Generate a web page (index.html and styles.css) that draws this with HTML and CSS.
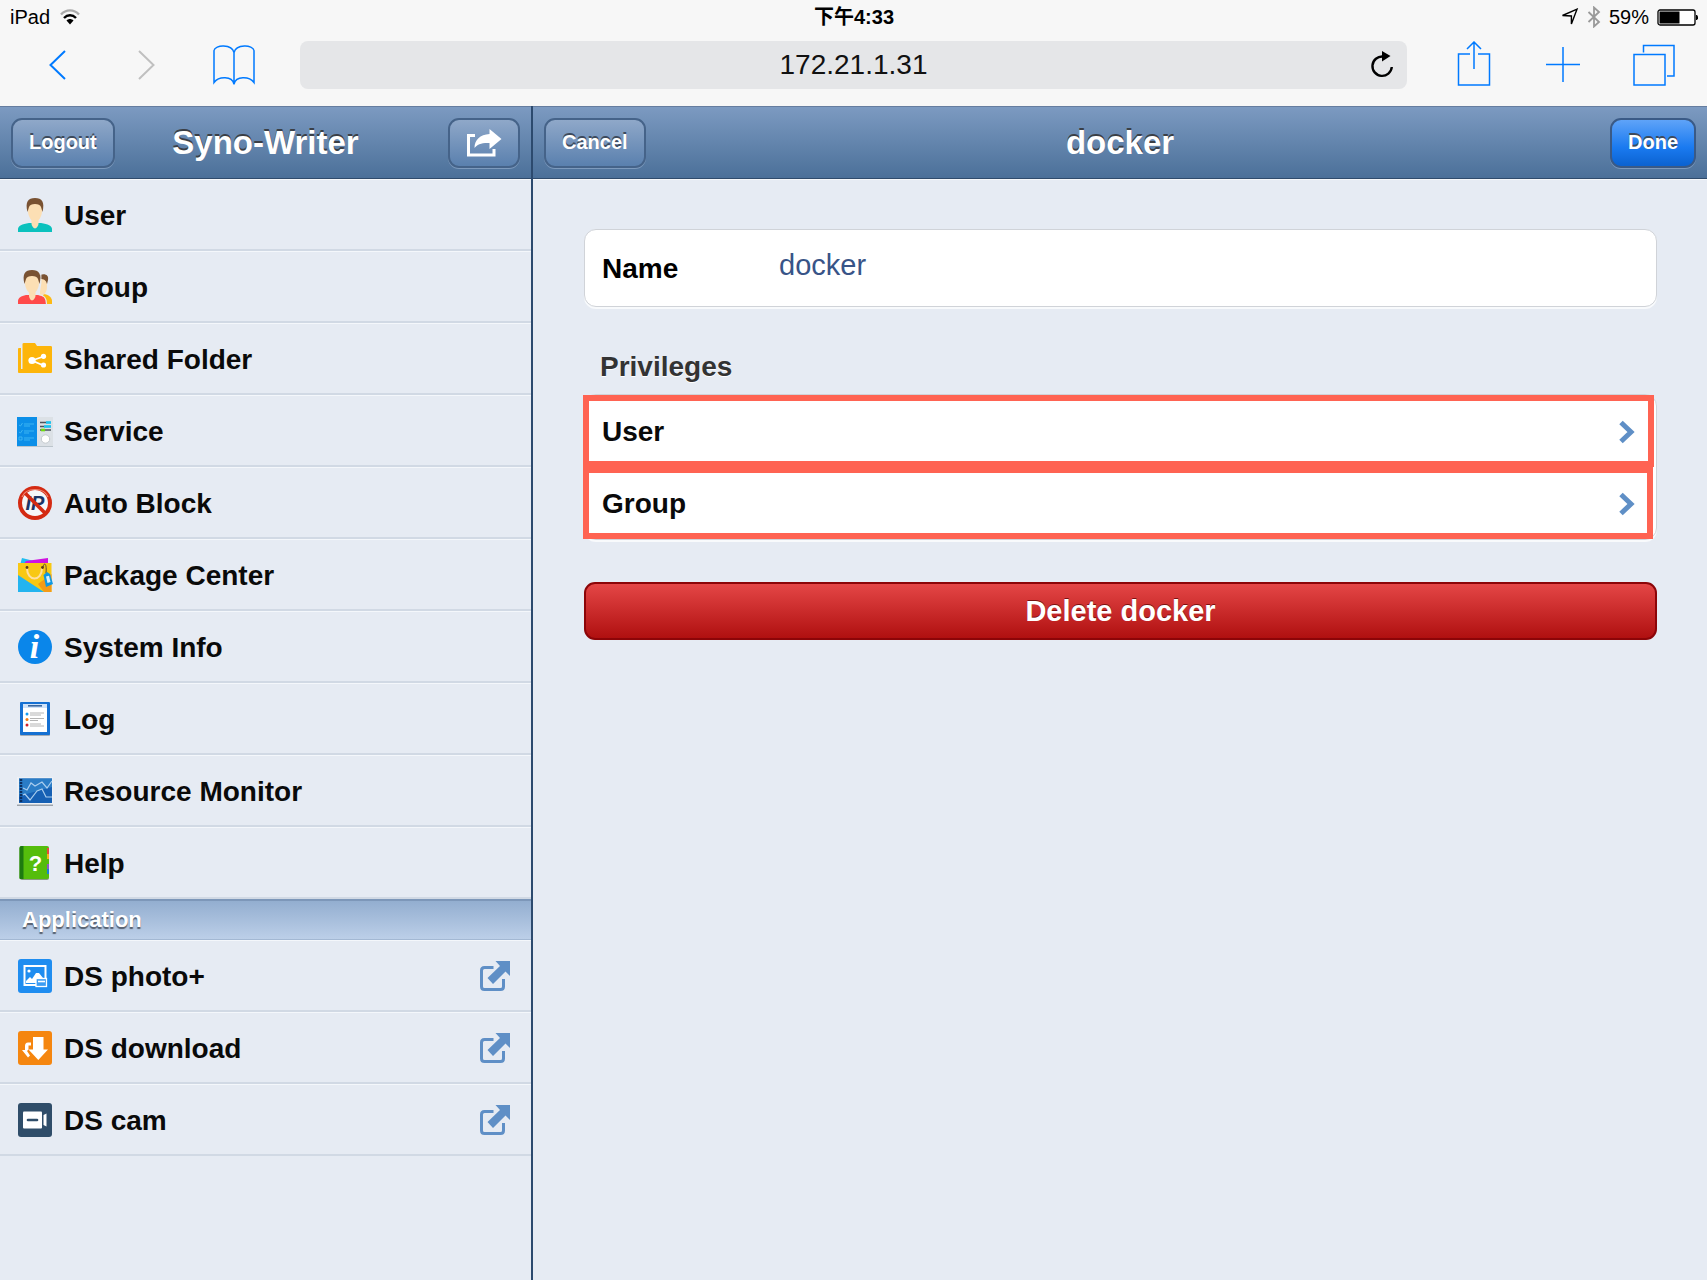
FILE: index.html
```html
<!DOCTYPE html>
<html lang="en">

<head>
    <meta charset="UTF-8">
    <meta name="viewport" content="width=device-width, initial-scale=1.0">
    <title>docker - Syno-Writer</title>
    <link rel="stylesheet" href="styles.css">
</head>

<body>
    <!-- browser bar -->
    <div class="browser">
        <div class="status">
            <div class="status-left">
                <span>iPad</span>
                <svg width="20" height="16" viewBox="0 0 20 16">
                    <path d="M1 5.500C6 0 14 0 19 5.500" fill="none" stroke="#aaa" stroke-width="2.400"/>
                    <path d="M4 9C7.500 5.300 12.500 5.300 16 9" fill="none" stroke="#000" stroke-width="2.400"/>
                    <path d="M6.500 11.500C8.500 9.500 11.500 9.500 13.500 11.500L10 15.500z" fill="#000"/>
                </svg>
            </div>
            <div class="status-time">下午4:33</div>
            <div class="status-right">
                <svg width="18" height="18" viewBox="0 0 18 18">
                    <path d="M1.500 7.500L16 1.200L10.400 16V8z" fill="none" stroke="#000" stroke-width="1.400"/>
                </svg>
                <svg width="14" height="22" viewBox="0 0 14 22">
                    <path d="M1.500 6L12 16L7 20.500V1.500L12 6L1.500 16" fill="none" stroke="#999" stroke-width="1.800"/>
                </svg>
                <span>59%</span>
                <svg width="41" height="17" viewBox="0 0 41 17">
                    <rect x="1" y="1" width="37" height="15" rx="2" fill="#fff" stroke="#000" stroke-width="1.300"/>
                    <rect x="2.500" y="2.500" width="20" height="12" fill="#000"/>
                    <path d="M39 6h1l1 1.500v2l-1 1.500H39z" fill="#000"/>
                </svg>
            </div>
        </div>
        <div class="toolbar">
            <div class="tools">
                <button type="button" aria-label="Back">
                    <svg width="18" height="30" viewBox="0 0 18 30"><path d="M16 1L1.500 15L16 29" fill="none" stroke="#007aff" stroke-width="2"/></svg>
                </button>
                <button type="button" aria-label="Forward">
                    <svg width="18" height="30" viewBox="0 0 18 30"><path d="M2 1L16.500 15L2 29" fill="none" stroke="#c0c0c0" stroke-width="2"/></svg>
                </button>
                <button type="button" aria-label="Bookmarks">
                    <svg width="42" height="40" viewBox="0 0 42 40"><path d="M21 7.500C19 -1 2 -0.500 1 5.500V37.500C6 31 19 31 21 39C23 31 36 31 41 37.500V5.500C40 -0.500 23 -1 21 7.500zM21 7.500V39.500" fill="none" stroke="#007aff" stroke-width="1.500"/></svg>
                </button>
            </div>
            <div class="address">
                <input type="text" value="172.21.1.31" aria-label="Address">
                <button type="button" aria-label="Reload">
                    <svg width="24" height="27" viewBox="0 0 24 27">
                        <path d="M13 5.500A9.700 9.700 0 1 0 21.800 16" fill="none" stroke="#000" stroke-width="2.400"/>
                        <path d="M12 0L20.500 5L12 10.500z" fill="#000"/>
                    </svg>
                </button>
            </div>
            <div class="tools tools-right">
                <button type="button" aria-label="Share">
                    <svg width="34" height="48" viewBox="0 0 34 48"><path d="M13 13H1.500V44H32.500V13H21M17 28V2M10 8L17 1L24 8" fill="none" stroke="#007aff" stroke-width="1.500"/></svg>
                </button>
                <button type="button" aria-label="New tab">
                    <svg width="36" height="36" viewBox="0 0 36 36"><path d="M17 0V35M0 17.500H34" fill="none" stroke="#007aff" stroke-width="1.500"/></svg>
                </button>
                <button type="button" aria-label="Tabs">
                    <svg width="42" height="42" viewBox="0 0 42 42"><path d="M1 10.500H32V41H1zM10.500 8.500V1.500H41V32H34" fill="none" stroke="#007aff" stroke-width="1.500"/></svg>
                </button>
            </div>
        </div>
    </div>

    <div class="app">
        <div class="sidebar">
            <header class="bar">
                <button type="button" class="btn">Logout</button>
                <h1>Syno-Writer</h1>
                <button type="button" class="btn" aria-label="Go to">
                    <svg width="36" height="28" viewBox="0 0 36 28">
                        <path d="M9 6.500H2.500V26H28V20" fill="none" stroke="#fff" stroke-width="3"/>
                        <path d="M23.500 0L35.500 10L23.500 20V14C16 13.500 11 15.500 8.500 19C8.500 11 14 5.500 23.500 5z" fill="#fff"/>
                    </svg>
                </button>
            </header>

            <ul class="menu">
                <li><a href="#user">
                    <svg class="icon" viewBox="0 0 34 34">
                        <path d="M0 34V31C0 28 4 26 11 25H23C30 26 34 28 34 31V34z" fill="#0bc1bd"/>
                        <path d="M13.500 19H20.500V25.500C20.500 27.500 18.500 30.500 17 30.500S13.500 27.500 13.500 25.500z" fill="#fcdfb4"/>
                        <path d="M10 8C10 4 24 4 24 8V13C24 19 20 24 17 24S10 19 10 13z" fill="#fcdfb4"/>
                        <path d="M9.500 14C7 4 10 0 17 0S27 4 24.500 14L23 9C22.500 7 20 6 17 6S11.500 7 11 9z" fill="#795232"/>
                    </svg>
                    <span>User</span></a></li>
                <li><a href="#group">
                    <svg class="icon" viewBox="0 0 34 34">
                        <path d="M25 34V24C31 24 34 28 34 31V34z" fill="#fdb913"/>
                        <path d="M22 8H29V17C29 22 26 26 22 26z" fill="#fcdfb4"/>
                        <path d="M22 5C27 3 31 5 30 10L29 14C28 10 26 9 22 9z" fill="#795232"/>
                        <path d="M0 34V31C0 28 3 26 8 25H20C25 26 28 28 28 31V34z" fill="#ff4a4a"/>
                        <path d="M22.800 3V13L21 24.500C26 25 28.500 28 28.500 34" fill="none" stroke="#e6ebf3" stroke-width="1.200"/>
                        <path d="M11 19H17.500V25.500C17.500 27.500 15.500 30.500 14 30.500S11 27.500 11 25.500z" fill="#fcdfb4"/>
                        <path d="M7 8C7 4 21 4 21 8V13C21 19 17 24 14 24S7 19 7 13z" fill="#fcdfb4"/>
                        <path d="M6.500 14C4 4 7 0 14 0S24 4 21.500 14L20 9C19.500 7 17 6 14 6S8.500 7 8 9z" fill="#795232"/>
                    </svg>
                    <span>Group</span></a></li>
                <li><a href="#share">
                    <svg class="icon" viewBox="0 0 34 34">
                        <path d="M0 7Q0 6 1 6H3V27H4.500V2Q4.500 1 6 1H17L19 4H32.500Q34 4 34 5V30Q34 31 33 31H1Q0 31 0 30z" fill="#fdb50a"/>
                        <path d="M25.500 14.500L14 18.500L25.500 23.500" fill="none" stroke="#fff" stroke-width="1.800"/>
                        <circle cx="14" cy="18.500" r="3.600" fill="#fff"/>
                        <circle cx="25.500" cy="14.300" r="2.600" fill="#fff"/>
                        <circle cx="25.500" cy="23" r="2.600" fill="#fff"/>
                    </svg>
                    <span>Shared Folder</span></a></li>
                <li><a href="#service">
                    <svg class="icon" viewBox="0 0 34 34">
                        <rect x="-1" y="3" width="36" height="30" fill="#bcc5cc"/>
                        <rect x="19" y="3" width="16" height="29" fill="#dce1e6"/>
                        <rect x="-1" y="3" width="20" height="29" fill="#0c8fe8"/>
                        <path d="M1 11l1.500 1 2-3M1 18l1.500 1 2-3M1 23h3v3H1zM6 10h10M6 12h6M6 17h10M6 19h5M6 24h10M6 26h6" fill="none" stroke="#3bb4f2" stroke-width="1"/>
                        <path d="M22 8.500H33M22 12.500H33M22 16H33" stroke="#4c545c" stroke-width="1.600"/>
                        <path d="M28 8.500H33M26 12.500H33" stroke="#18c5f3" stroke-width="2.400"/>
                        <path d="M23 16H27" stroke="#6fdc10" stroke-width="2.600"/>
                        <circle cx="27.500" cy="25" r="4.200" fill="#fff" stroke="#c4cace" stroke-width="1"/>
                    </svg>
                    <span>Service</span></a></li>
                <li><a href="#autoblock">
                    <svg class="icon" viewBox="0 0 34 34">
                        <circle cx="17" cy="17" r="15" fill="#f6f7f9"/>
                        <text class="icon-ip" x="17" y="24" text-anchor="middle">IP</text>
                        <path d="M6.500 6.500L27.500 27.500" stroke="#d42a12" stroke-width="3.600"/>
                        <circle cx="17" cy="17" r="15" fill="none" stroke="#d42a12" stroke-width="4"/>
                        <path d="M4 11C8 1 26 1 30 11" fill="none" stroke="#ee8772" stroke-width="1.200"/>
                    </svg>
                    <span>Auto Block</span></a></li>
                <li><a href="#package">
                    <svg class="icon" viewBox="0 0 34 34">
                        <path d="M4 0L16 3V7H2z" fill="#20bdf0"/>
                        <path d="M8 3L30 0V7H5z" fill="#cf12e0"/>
                        <path d="M0 5H33.500V34H0z" fill="#f8c813"/>
                        <path d="M20 26L33.500 16V34H26z" fill="#f49b17"/>
                        <path d="M0 17L26 34H0z" fill="#23b4ef"/>
                        <path d="M9 10C9 24 24 24 24 10" fill="none" stroke="#ffdfa0" stroke-width="2"/>
                        <circle cx="9" cy="9.500" r="1.400" fill="#5a3b12"/>
                        <circle cx="24.500" cy="9.500" r="1.400" fill="#5a3b12"/>
                        <path d="M25 9C26 4 29 5 28 15" fill="none" stroke="#5a4a3a" stroke-width="1"/>
                        <path d="M25.500 17L29 14L32 16L35 26L28 29z" fill="#0f98e2"/>
                        <path d="M28 18.500L31 17.800L32.500 24L29.500 25z" fill="#d8f0fc"/>
                    </svg>
                    <span>Package Center</span></a></li>
                <li><a href="#info">
                    <svg class="icon" viewBox="0 0 34 34">
                        <circle cx="17" cy="17" r="17" fill="#0a86ea"/>
                        <text class="icon-i" x="16.500" y="28" text-anchor="middle">i</text>
                    </svg>
                    <span>System Info</span></a></li>
                <li><a href="#log">
                    <svg class="icon" viewBox="0 0 34 34">
                        <rect x="2" y="2" width="30" height="32" rx="1" fill="#a5acb5"/>
                        <rect x="2" y="0" width="30" height="33" rx="1" fill="#1570d2"/>
                        <rect x="5" y="2" width="24" height="28" fill="#fff"/>
                        <rect x="5" y="2" width="24" height="4" fill="#cfe2f8"/>
                        <path d="M10 3.800H24" stroke="#39679f" stroke-width="1.600"/>
                        <path d="M12 11H26M12 13H23M12 16.500H26M12 18.500H20M12 22H23M12 24H26" stroke="#b4b4b4" stroke-width="1"/>
                        <circle cx="9" cy="12" r="1.500" fill="#159bf2"/>
                        <circle cx="9" cy="17.500" r="1.500" fill="#f57a10"/>
                        <circle cx="9" cy="23" r="1.500" fill="#d0202a"/>
                    </svg>
                    <span>Log</span></a></li>
                <li><a href="#monitor">
                    <svg class="icon" viewBox="0 0 34 34">
                        <rect x="-1" y="4" width="36" height="28" fill="#9da3aa"/>
                        <rect x="-1" y="3" width="36" height="27.500" fill="#eef1f5"/>
                        <rect x="1" y="4.500" width="33" height="24.500" fill="#1660b4"/>
                        <path d="M1 4.500H34V13L1 22z" fill="#2a7cc6"/>
                        <path d="M3 5V29" stroke="#0c2f60" stroke-width="2.500" stroke-dasharray="2 1"/>
                        <path d="M5 14L9 16L13 9L17 12L24 8L29 14L34 7M5 21L7 20L12 26L19 17L24 15L28 23H34" fill="none" stroke="#a9cdee" stroke-width="1.200"/>
                    </svg>
                    <span>Resource Monitor</span></a></li>
                <li><a href="#help">
                    <svg class="icon" viewBox="0 0 34 34">
                        <rect x="2" y="2" width="29" height="32" rx="2" fill="#8a9a82"/>
                        <path d="M1.500 2Q1.500 0 3.500 0H29Q31 0 31 2V31Q31 33 29 33H2.500Q1.500 33 1.500 32z" fill="#55bd0c"/>
                        <path d="M29 2H31V8H29z" fill="#e84a3c"/>
                        <path d="M29 8H31V13H29z" fill="#f5b41c"/>
                        <path d="M29 18H31V23H29z" fill="#8a5cc0"/>
                        <path d="M29 23H31V28H29z" fill="#1a80d8"/>
                        <path d="M1.500 2Q1.500 0 3.500 0H5.500V33H2.500Q1.500 33 1.500 32z" fill="#1e7a10"/>
                        <text class="icon-help" x="17.500" y="25" text-anchor="middle">?</text>
                    </svg>
                    <span>Help</span></a></li>
            </ul>

            <h2 class="divider">Application</h2>

            <ul class="menu">
                <li><a href="#photo">
                    <svg class="icon" viewBox="0 0 34 34">
                        <rect width="34" height="34" rx="3" fill="#1f8df0"/>
                        <rect x="6.500" y="7" width="21" height="19" fill="none" stroke="#fff" stroke-width="2"/>
                        <circle cx="11" cy="12" r="1.600" fill="#fff"/>
                        <path d="M8 22L12 18L14 20L18 14H21L25 19V24H8z" fill="#fff"/>
                        <rect x="18" y="19.500" width="10.500" height="8" fill="#3b9cf3" stroke="#fff" stroke-width="1.300"/>
                        <path d="M20 22.500H27" stroke="#fff" stroke-width="1.600"/>
                    </svg>
                    <span>DS photo+</span>
                    <svg class="external" viewBox="0 0 30 30"><use href="#external"/></svg></a></li>
                <li><a href="#download">
                    <svg class="icon" viewBox="0 0 34 34">
                        <rect width="34" height="34" rx="3" fill="#f5860f"/>
                        <path d="M15 6H25.500V18.500H30L20.300 29L10.500 18.500H15z" fill="#fff"/>
                        <path d="M7 15Q7 11.500 10 11.500H13V14.500H10.500V18.500L9 20L12 24.500L10 26.500L4 19H7z" fill="#fff"/>
                    </svg>
                    <span>DS download</span>
                    <svg class="external" viewBox="0 0 30 30"><use href="#external"/></svg></a></li>
                <li><a href="#cam">
                    <svg class="icon" viewBox="0 0 34 34">
                        <rect width="34" height="34" rx="3" fill="#2f4d69"/>
                        <rect x="5" y="8.500" width="19" height="17" rx="1" fill="#fff"/>
                        <path d="M10 17H19" stroke="#2f4d69" stroke-width="2.600" stroke-linecap="round"/>
                        <path d="M25.500 12L28.500 10.500V23.500L25.500 22z" fill="#fff"/>
                    </svg>
                    <span>DS cam</span>
                    <svg class="external" viewBox="0 0 30 30">
                        <g id="external" fill="#5f8fc6">
                            <path d="M15.500 0H30V15L25.500 10.500L13 23L7.500 17L20 5z"/>
                            <path d="M13.500 6.500H4.500Q1.500 6.500 1.500 9.500V25.500Q1.500 28.500 4.500 28.500H20.500Q23.500 28.500 23.500 25.500V18" fill="none" stroke="#5f8fc6" stroke-width="3"/>
                        </g>
                    </svg></a></li>
            </ul>
        </div>

        <div class="main">
            <header class="bar">
                <button type="button" class="btn">Cancel</button>
                <h1>docker</h1>
                <button type="submit" form="editForm" class="btn btn-done">Done</button>
            </header>

            <form id="editForm" class="content">
                <div class="card field">
                    <label for="name">Name</label>
                    <input type="text" id="name" name="name" value="docker">
                </div>

                <h2>Privileges</h2>
                <div class="card">
                    <a class="row" href="#privilege-user">User
                        <svg width="16" height="24" viewBox="0 0 16 24"><path d="M2 2.500L12 12L2 21.500" fill="none" stroke="#5f8fc6" stroke-width="5"/></svg>
                    </a>
                    <a class="row row-last" href="#privilege-group">Group
                        <svg width="16" height="24" viewBox="0 0 16 24"><path d="M2 2.500L12 12L2 21.500" fill="none" stroke="#5f8fc6" stroke-width="5"/></svg>
                    </a>
                </div>

                <button type="button" class="delete">Delete docker</button>
            </form>
        </div>
    </div>
</body>

</html>
```

FILE: styles.css
```css
* {
    box-sizing: border-box;
}

body {
    margin: 0;
    min-height: 100vh;
    display: flex;
    flex-direction: column;
    font-family: "Liberation Sans", "Noto Sans CJK TC", sans-serif;
    font-size: 28px;
    background-color: #e6ebf3;
    color: #0a0a0a;
}

h1, h2, ul {
    margin: 0;
    padding: 0;
}

button, input {
    font-family: inherit;
}

svg {
    display: block;
    flex: none;
}

/* browser bar */
.browser {
    background-color: #f7f7f7;
    color: #000;
}

.status {
    display: grid;
    grid-template-columns: 1fr auto 1fr;
    align-items: center;
    height: 34px;
    padding: 0 9px 0 10px;
    font-size: 20px;
    line-height: 20px;
}

.status-left, .status-right {
    display: flex;
    align-items: center;
    gap: 10px;
}

.status-right {
    justify-content: flex-end;
    gap: 8px;
}

.status-time {
    font-weight: bold;
}

.toolbar {
    display: flex;
    gap: 22px;
    padding: 7px 8px 17px 14px;
}

.tools {
    display: flex;
}

.tools button {
    display: flex;
    align-items: center;
    justify-content: center;
    width: 88px;
    padding: 0;
    border: none;
    background: none;
}

.tools-right button {
    width: 90px;
}

.address {
    position: relative;
    flex: 1;
}

.address input {
    display: block;
    width: 100%;
    height: 48px;
    border: none;
    border-radius: 8px;
    background-color: #e5e6e8;
    color: #111;
    font-size: 28px;
    text-align: center;
}

.address button {
    position: absolute;
    right: 13px;
    top: 10px;
    padding: 0;
    border: none;
    background: none;
}

/* app */
.app {
    flex: 1;
    display: flex;
}

.sidebar {
    width: 533px;
    border-right: 2px solid #2c4a6e;
}

.main {
    flex: 1;
}

.bar {
    position: relative;
    display: grid;
    grid-template-columns: 1fr auto 1fr;
    align-items: center;
    height: 73px;
    padding: 0 11px;
    border-top: 1px solid #657d9f;
    border-bottom: 1px solid #2f4b6c;
    background-image: linear-gradient(#7c9ac1, #4b7099);
    box-shadow: 0 1px 0 #f4f7fa;
}

.bar h1 {
    color: #fff;
    font-size: 33px;
    text-shadow: 0 -2px 0 #3a3f46;
}

.btn {
    justify-self: start;
    height: 50px;
    padding: 0 16px;
    border: 2px solid #456389;
    border-radius: 11px;
    background-image: linear-gradient(#8fa8c9, #5a80ae);
    box-shadow: 0 1px 0 #7d9abd;
    color: #fff;
    font-size: 20px;
    font-weight: bold;
    text-shadow: 0 -2px 0 #3d4a5c;
}

.btn:last-child {
    justify-self: end;
}

.btn-done {
    border-color: #3a5a86;
    background-image: linear-gradient(#5fa3f8, #1a7af0 60%, #0b62d0);
}

.menu {
    list-style: none;
}

.menu a {
    display: flex;
    align-items: center;
    gap: 12px;
    height: 72px;
    padding: 0 21px 0 18px;
    border-top: 1px solid #f4f7fb;
    border-bottom: 2px solid #d1d9e4;
    color: inherit;
    font-weight: bold;
    text-decoration: none;
}

.menu span {
    padding-top: 2px;
}

.icon {
    width: 34px;
    height: 34px;
    overflow: visible;
}

.icon-ip {
    fill: #1d3566;
    font-size: 20px;
    font-style: italic;
}

.icon-i {
    fill: #fff;
    font-family: "Liberation Serif", serif;
    font-size: 34px;
    font-style: italic;
}

.icon-help {
    fill: #fff;
    font-size: 22px;
}

.external {
    width: 30px;
    height: 30px;
    margin-left: auto;
}

.divider {
    height: 41px;
    padding-left: 22px;
    border-top: 2px solid #7d97b9;
    border-bottom: 1px solid #a3b8d3;
    background-image: linear-gradient(#93aed0, #bccfe8);
    color: #fff;
    font-size: 22px;
    line-height: 38px;
    text-shadow: 0 2px 1px #555f6e;
}

.content {
    padding: 50px 50px 50px 51px;
}

.content h2 {
    margin: 44px 0 11px;
    padding-left: 16px;
    color: #333;
    font-size: 28px;
    line-height: 32px;
    text-shadow: 0 1px 0 #fff;
}

.card {
    border: 1px solid #d0d3d8;
    border-radius: 12px;
    background-color: #fff;
    box-shadow: 0 2px 0 #f8fafc;
}

.field {
    display: flex;
    height: 78px;
    padding-left: 17px;
}

.field label {
    width: 177px;
    color: #000;
    font-weight: bold;
    line-height: 78px;
}

.field input {
    flex: 1;
    min-width: 0;
    margin-right: 16px;
    padding: 0 0 6px;
    border: none;
    background: none;
    color: #385487;
    font-size: 29px;
}

.row {
    display: flex;
    align-items: center;
    justify-content: space-between;
    height: 72px;
    margin: 0 2px 0 -2px;
    padding: 1px 13px 0;
    border: 6px solid #ff6352;
    color: inherit;
    font-weight: bold;
    text-decoration: none;
}

.row-last {
    margin-right: 3px;
    padding-right: 12px;
}

.delete {
    display: block;
    width: 100%;
    height: 58px;
    margin-top: 42px;
    border: 2px solid #8c0508;
    border-radius: 11px;
    background-image: linear-gradient(#e44646, #b01010);
    color: #fff;
    font-size: 29px;
    font-weight: bold;
    text-shadow: 0 -1px 0 #7a1010;
}
```
